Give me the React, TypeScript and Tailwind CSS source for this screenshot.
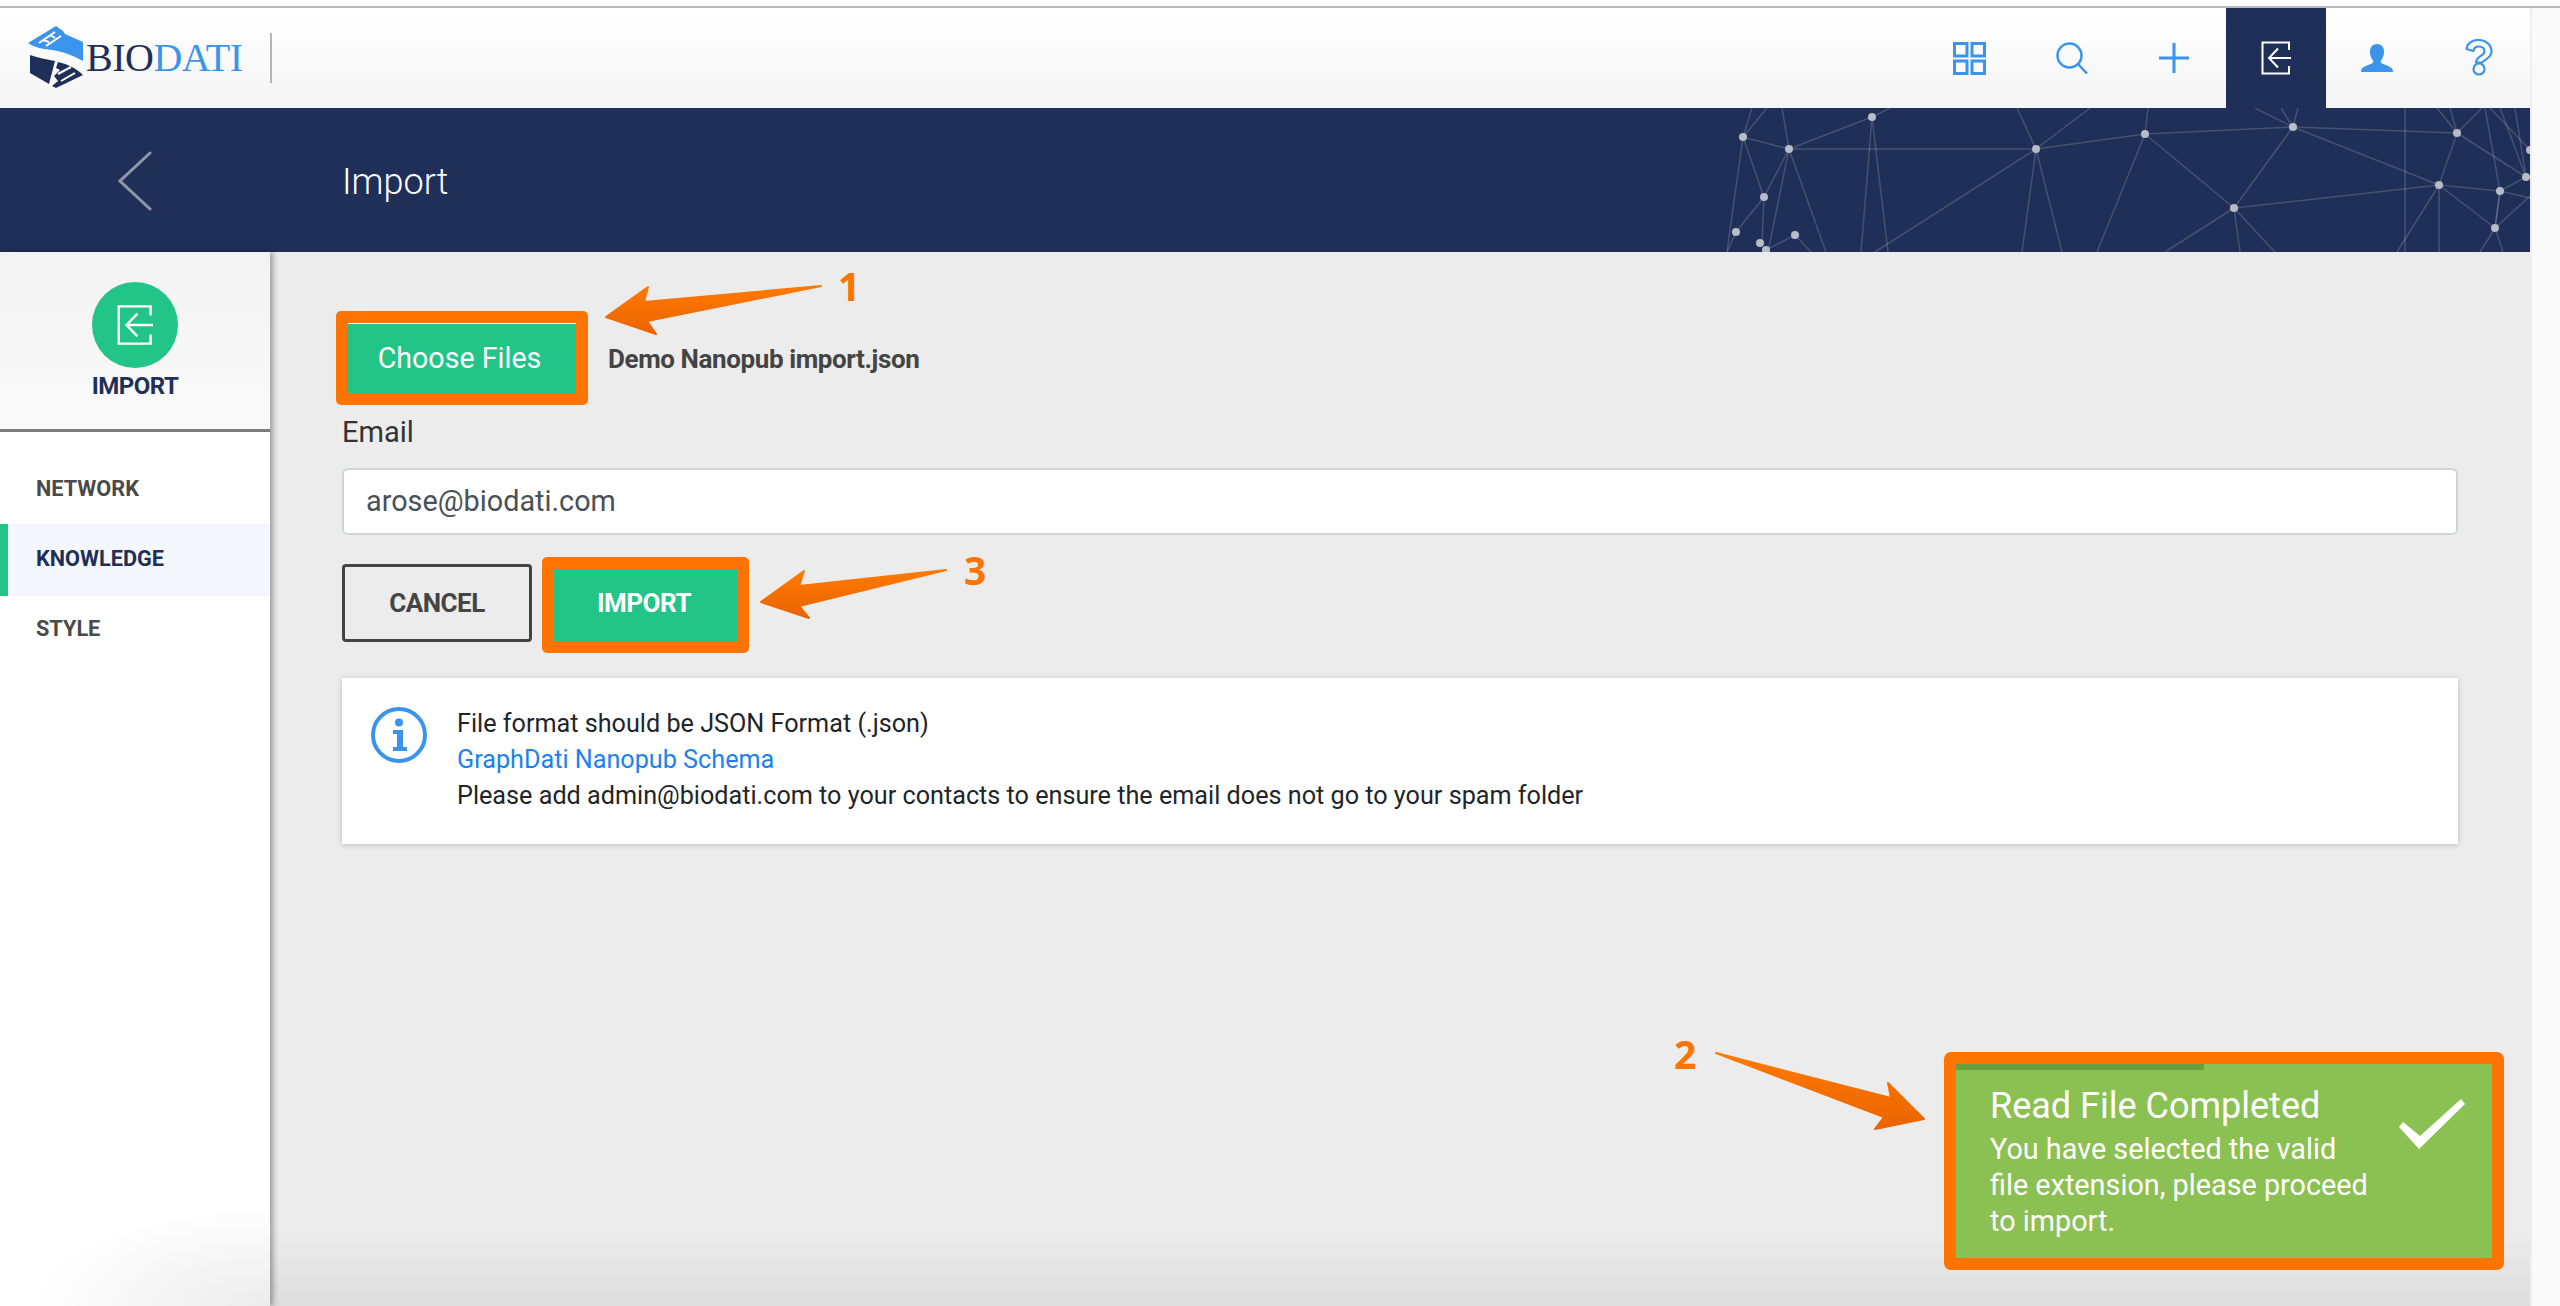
import React from 'react';

const BLUE = '#3b94ec';

const nodes: [number, number][] = [
  [1743, 137], [1789, 149], [1872, 117], [1764, 197], [1736, 232], [1760, 243], [1795, 235], [1766, 250],
  [2036, 149], [2145, 134], [2293, 127], [2234, 208], [2457, 133], [2439, 185], [2500, 191], [2526, 177],
  [2495, 228], [2530, 150],
];

const links: [number, number, number, number][] = [
  [1743, 137, 1789, 149], [1789, 149, 1872, 117], [1872, 117, 1890, 108], [1789, 149, 2036, 149],
  [2036, 149, 2145, 134], [2145, 134, 2293, 127], [2293, 127, 2457, 133], [2293, 127, 2439, 185],
  [2457, 133, 2439, 185], [2457, 133, 2526, 177], [2439, 185, 2500, 191], [2500, 191, 2526, 177],
  [2439, 185, 2495, 228], [2500, 191, 2495, 228], [2234, 208, 2293, 127], [2234, 208, 2439, 185],
  [2234, 208, 2145, 134], [2234, 208, 2165, 252], [2234, 208, 2240, 252], [2234, 208, 2275, 252],
  [2036, 149, 1875, 252], [2036, 149, 2022, 252], [2036, 149, 2062, 252], [2036, 149, 2017, 108],
  [2036, 149, 2090, 108], [2145, 134, 2097, 252], [2145, 134, 2148, 108], [1789, 149, 1826, 252],
  [1789, 149, 1768, 252], [1789, 149, 1782, 108], [1743, 137, 1752, 108], [1743, 137, 1767, 108],
  [1743, 137, 1727, 252], [1743, 137, 1764, 197], [1789, 149, 1764, 197], [1764, 197, 1736, 232],
  [1764, 197, 1762, 243], [1736, 232, 1727, 252], [1872, 117, 1861, 252], [1872, 117, 1888, 252],
  [1766, 250, 1795, 235], [1795, 235, 1811, 252], [2293, 127, 2255, 108], [2293, 127, 2281, 108],
  [2293, 127, 2298, 108], [2405, 108, 2405, 252], [2457, 133, 2437, 108], [2457, 133, 2450, 108],
  [2457, 133, 2482, 108], [2439, 185, 2397, 252], [2439, 185, 2439, 252], [2495, 228, 2480, 252],
  [2495, 228, 2503, 252], [2485, 108, 2500, 191], [2500, 191, 2495, 228], [2526, 177, 2500, 108],
  [2526, 177, 2515, 108], [2530, 150, 2490, 108], [2495, 228, 2530, 196], [2500, 191, 2530, 198],
];

function ImportGlyph({ className }: { className?: string }) {
  return (
    <svg className={className} viewBox="0 0 30 34" fill="none" stroke="currentColor" strokeWidth={2}>
      <path d="M28 9V1.5H1.5v31H28V25" />
      <path d="M30 17H8M17 7.5 8 17l9 9.500" />
    </svg>
  );
}

function Logo() {
  return (
    <div className="flex items-center">
      <svg className="w-[56px] h-[64px] mt-[-2px]" viewBox="0 0 56 64">
        <path fill={BLUE} d="M0 18 28 1l7 5 2 3 18 8v19C44 30 36 27 24 25 14 24 6 22 0 18Z" />
        <path stroke="#fff" strokeWidth={2} fill="none" d="M11 18 27 7M18 21 33 11M21 17l-6-2M27 13l-5-3" />
        <path fill="#1f2f57" d="M2 30c9 3 16 4 25 6l-6 23L2 48Z" />
        <path fill="#1f2f57" d="M30 37c10 2 19 7 25 13L28 63l-4-2 6-5-4-5 6-6-4-2Z" />
        <path stroke="#fff" strokeWidth={2} fill="none" d="M30 49l13-7M33 56l14-8" />
      </svg>
      <span className="ml-[2px] text-[40px] tracking-[-0.5px] leading-none font-['Liberation_Serif',serif]">
        <span className="text-[#1f2f57]">BIO</span>
        <span className="text-[#3b94ec]">DATI</span>
      </span>
    </div>
  );
}

function Banner() {
  return (
    <div className="relative h-[144px] flex items-center bg-[#1f2f57] overflow-hidden">
      <svg className="absolute left-[1727px] top-0 w-[803px] h-[144px]" viewBox="1727 108 803 144">
        {links.map(([x1, y1, x2, y2], i) => (
          <line key={i} x1={x1} y1={y1} x2={x2} y2={y2} stroke="#fff" strokeOpacity={0.17} strokeWidth={1.5} />
        ))}
        {nodes.map(([cx, cy], i) => (
          <circle key={i} cx={cx} cy={cy} r={4} fill="#b7bcc9" />
        ))}
      </svg>
      <svg className="ml-[118px] mt-[2px] w-[34px] h-[60px]" viewBox="0 0 34 60" fill="none" stroke="#9097a8" strokeWidth={3} strokeLinecap="round">
        <path d="M32 2 2 30l30 28" />
      </svg>
      <span className="ml-[190px] mt-[3px] text-[36px] font-light text-white">Import</span>
    </div>
  );
}

function Header() {
  return (
    <div className="h-[100px] flex items-center bg-gradient-to-b from-white to-[#f5f5f5]">
      <div className="ml-[28px]">
        <Logo />
      </div>
      <div className="ml-[28px] w-[2px] h-[50px] bg-[#b5b5b5]" />
      <div className="ml-auto h-full flex items-stretch text-[#3b94ec]">
        <div className="w-[103px] flex items-center justify-center">
          <svg className="w-[33px] h-[33px]" viewBox="0 0 33 33" fill="none" stroke="currentColor" strokeWidth={3}>
            <path d="M1.500 1.500h12.500v12.500H1.500zM19 1.500h12.500v12.500H19zM1.500 19h12.500v12.500H1.500zM19 19h12.500v12.500H19z" />
          </svg>
        </div>
        <div className="w-[103px] flex items-center justify-center">
          <svg className="w-[32px] h-[32px] -ml-[2px]" viewBox="0 0 32 32" fill="none" stroke="currentColor" strokeWidth={2.500}>
            <circle cx="13.500" cy="13.500" r="12" />
            <path d="M22 22l9 9.500" />
          </svg>
        </div>
        <div className="w-[102px] flex items-center justify-center">
          <svg className="w-[30px] h-[30px] -ml-[2px]" viewBox="0 0 30 30" stroke="currentColor" strokeWidth={3}>
            <path d="M0 15h30M15 0v30" />
          </svg>
        </div>
        <div className="w-[100px] flex items-center justify-center bg-[#1f2f57] text-white">
          <ImportGlyph className="w-[30px] h-[34px]" />
        </div>
        <div className="w-[102px] flex items-center justify-center">
          <svg className="w-[32px] h-[28px]" viewBox="0 0 32 28" fill="currentColor">
            <path d="M16 0c5 0 7.500 4 7 9-.3 3-1.500 5.500-3 7.500-.5 1-.3 2.200 1 3 3 1.500 8 2.500 10 5 .7 1 1 2.500 1 3.500H0c0-1 .3-2.500 1-3.500 2-2.500 7-3.500 10-5 1.300-.8 1.500-2 1-3-1.500-2-2.700-4.500-3-7.500-.5-5 2-9 7-9Z" />
          </svg>
        </div>
        <div className="w-[102px] flex items-center justify-center">
          <svg className="w-[28px] h-[37px] -mt-[2px]" viewBox="0 0 28 37" fill="none" stroke="currentColor" strokeWidth={2.200}>
            <path d="M1.500 10C2 4.500 7 1 13.500 1 21 1 26.500 6 26.500 12.500c0 6.500-6.500 7.500-9.500 11h-6c0-6.500 8.500-6.500 8.500-11 0-3.500-2.500-5-6-5-2.500 0-4.500 1.500-5 4.500Z" strokeLinejoin="round" />
            <circle cx="14" cy="30" r="5.500" />
          </svg>
        </div>
      </div>
    </div>
  );
}

function Sidebar() {
  return (
    <div className="relative z-10 w-[270px] shrink-0 bg-[radial-gradient(ellipse_240px_100px_at_100%_100%,#ececec,#ffffff)] shadow-[3px_0_6px_rgba(0,0,0,0.35)]">
      <div className="h-[180px] pt-[30px] flex flex-col items-center border-b-[3px] border-[#7d7d7d] bg-gradient-to-b from-[#f3f3f3] to-[#fafafa]">
        <div className="w-[86px] h-[86px] rounded-full bg-[#22c587] flex items-center justify-center text-white">
          <ImportGlyph className="w-[36px] h-[44px]" />
        </div>
        <div className="mt-[3px] text-[24px] leading-[30px] font-bold tracking-[-0.5px] text-[#1f2f57]">IMPORT</div>
      </div>
      <div className="pt-[20px]">
        <div className="h-[72px] pl-[36px] pt-[2px] flex items-center text-[21.700px] font-bold text-[#4a4a4a]">NETWORK</div>
        <div className="h-[72px] pl-[28px] pb-[1px] flex items-center text-[21.700px] font-bold text-[#1f2f57] bg-[#f4f7fc] border-l-[8px] border-[#22c587]">
          KNOWLEDGE
        </div>
        <div className="h-[64px] pl-[36px] pt-[2px] flex items-center text-[21.700px] font-bold text-[#4a4a4a]">STYLE</div>
      </div>
    </div>
  );
}

function ImportForm() {
  return (
    <div className="flex-1 px-[72px] pt-[59px] bg-gradient-to-b from-[#ececec] from-[93%] to-[#dddddd]">
      <div className="flex items-center -ml-[6px]">
        <div className="border-[12px] border-[#ff7300] rounded-[5px]">
          <div className="w-[228px] h-[70px] pr-[5px] flex items-center justify-center bg-[#22c587] border-t border-white text-[28.600px] text-white">
            Choose Files
          </div>
        </div>
        <span className="ml-[20px] mt-[2px] text-[26px] font-bold tracking-[-0.4px] text-[#444444]">Demo Nanopub import.json</span>
      </div>

      <div className="mt-[9px] text-[29px] leading-[36px] text-[#333333]">Email</div>
      <div className="mt-[18px] h-[67px] pl-[22px] flex items-center bg-white border-2 border-[#ced4da] rounded-[6px] text-[28.800px] text-[#495057]">
        arose@biodati.com
      </div>

      <div className="mt-[22px] flex items-center">
        <div className="w-[190px] h-[78px] mb-[4px] flex items-center justify-center border-[3px] border-[#444444] rounded-[4px] text-[26px] font-bold tracking-[-0.5px] text-[#444444]">
          CANCEL
        </div>
        <div className="ml-[10px] border-[12px] border-[#ff7300] rounded-[5px]">
          <div className="w-[183px] h-[72px] pb-[3px] pr-[3px] flex items-center justify-center bg-[#22c587] text-[26px] font-bold tracking-[-0.5px] text-white">
            IMPORT
          </div>
        </div>
      </div>

      <div className="mt-[25px] h-[166px] pl-[29px] flex items-start bg-white shadow-[0_1px_6px_rgba(0,0,0,0.2)]">
        <svg className="mt-[29px] w-[56px] h-[56px] shrink-0" viewBox="0 0 56 56" fill={BLUE}>
          <circle cx="28" cy="28" r="26" fill="none" stroke={BLUE} strokeWidth={4} />
          <circle cx="28" cy="15.500" r="4" />
          <path d="M22 23h10v17h4v4H22v-4h4V27h-4Z" />
        </svg>
        <div className="ml-[30px] mt-[28px] text-[25.200px] leading-[36px] text-[#212529]">
          <div>File format should be JSON Format (.json)</div>
          <div className="text-[#1a82f0]">GraphDati Nanopub Schema</div>
          <div>Please add admin@biodati.com to your contacts to ensure the email does not go to your spam folder</div>
        </div>
      </div>
    </div>
  );
}

function Toast() {
  return (
    <div className="absolute left-[1944px] top-[1052px] w-[560px] h-[218px] border-[12px] border-[#ff7300] rounded-[7px] bg-[#8bc152] flex justify-between text-white">
      <div className="absolute left-0 top-0 w-[248px] h-[6px] bg-[#6b9e3f]" />
      <div className="pl-[34px] pt-[20px]">
        <div className="text-[36px] leading-[44px]">Read File Completed</div>
        <div className="mt-[3px] text-[28.800px] leading-[36px]">
          You have selected the valid
          <br />
          file extension, please proceed
          <br />
          to import.
        </div>
      </div>
      <svg className="mt-[35px] mr-[27px] w-[66px] h-[50px]" viewBox="0 0 66 50" fill="#fff">
        <path d="M62 0l4 5-46 45L0 28l4-5 17 14Z" />
      </svg>
    </div>
  );
}

function Annotations() {
  return (
    <>
      <svg className="absolute left-0 top-0 w-[2560px] h-[1306px] pointer-events-none" viewBox="0 0 2560 1306">
        <defs>
          <linearGradient id="arrowFill" x1="0" y1="0" x2="0" y2="1">
            <stop offset="0" stopColor="#ff7a00" />
            <stop offset="1" stopColor="#e96400" />
          </linearGradient>
        </defs>
        <g fill="url(#arrowFill)" stroke="url(#arrowFill)" strokeWidth={2} strokeLinejoin="round">
          <path d="M606 317 648 287l-4 15 177-16-174 35 9 13Z" />
          <path d="M761 602 804 571l-5 15 147-16-147 36 10 12Z" />
          <path d="M1716 1053 1891 1098l-3-15 36 36-49 10 9-12Z" />
        </g>
      </svg>
      <span className="absolute left-[838px] top-[260px] text-[39px] leading-[52px] font-bold text-[#ff7300] font-['Open_Sans',sans-serif]">1</span>
      <span className="absolute left-[1674px] top-[1028px] text-[39px] leading-[52px] font-bold text-[#ff7300] font-['Open_Sans',sans-serif]">2</span>
      <span className="absolute left-[964px] top-[544px] text-[39px] leading-[52px] font-bold text-[#ff7300] font-['Open_Sans',sans-serif]">3</span>
    </>
  );
}

export default function App() {
  return (
    <div className="relative w-[2560px] h-[1306px] overflow-hidden flex flex-col bg-white font-['Roboto',sans-serif]">
      <div className="h-[8px] shrink-0 border-b-2 border-[#b9b9b9] bg-white" />
      <div className="flex-1 flex min-h-0">
        <div className="w-[2530px] flex flex-col">
          <Header />
          <Banner />
          <div className="flex-1 flex min-h-0">
            <Sidebar />
            <ImportForm />
          </div>
        </div>
        <div className="flex-1 bg-[#fafafa] border-l-2 border-[#eeeeee]" />
      </div>
      <Toast />
      <Annotations />
    </div>
  );
}
